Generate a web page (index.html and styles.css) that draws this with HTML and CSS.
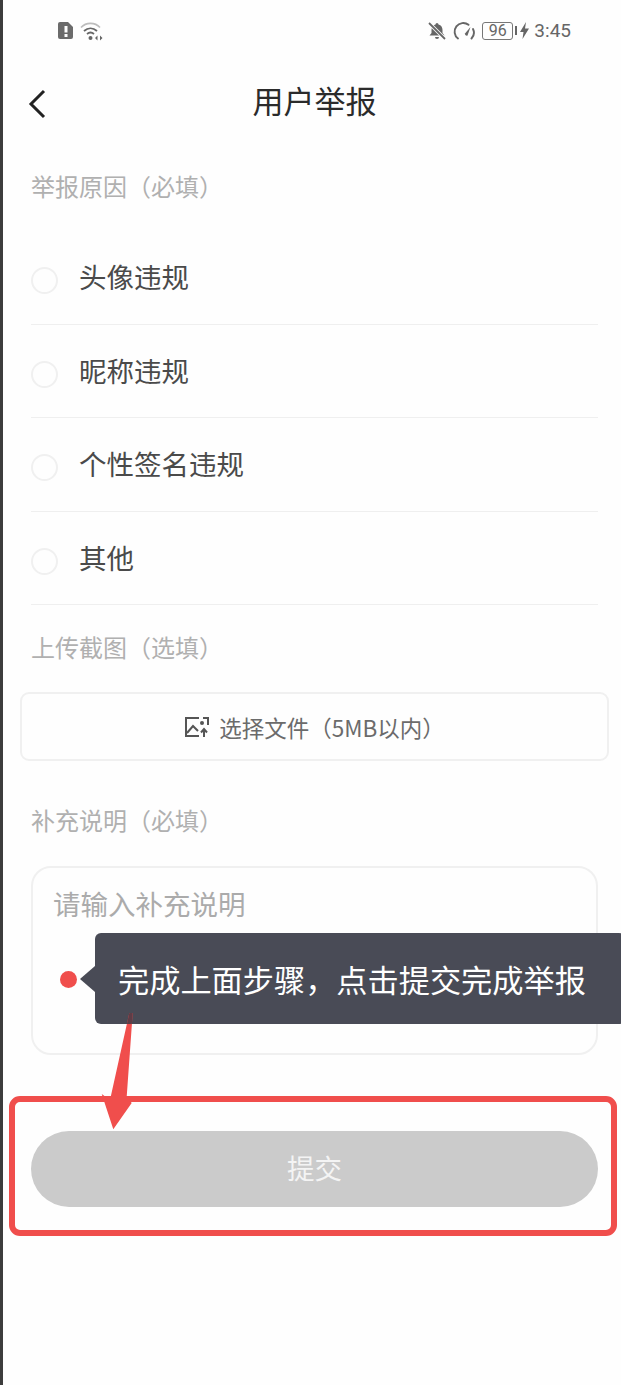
FILE: index.html
```html
<!DOCTYPE html>
<html lang="zh-CN">
<head>
    <meta charset="UTF-8">
    <title>用户举报</title>
    <link rel="stylesheet" href="styles.css">
</head>
<body>
    <div class="page">
        <div class="status-bar">
            <div class="status-left">
                <svg width="18" height="19" viewBox="0 0 18 19">
                    <path d="M3 1h8l5 5v10a2 2 0 0 1-2 2H3a2 2 0 0 1-2-2V3a2 2 0 0 1 2-2z" fill="#6b6b6b"/>
                    <rect x="7.5" y="5" width="3" height="6.5" fill="#fff"/>
                    <rect x="7.5" y="13" width="3" height="3" fill="#fff"/>
                </svg>
                <svg width="24" height="20" viewBox="0 0 24 20" fill="none">
                    <path d="M1 6.500C6 1 15 1 20 6.500" stroke="#bcbcbc" stroke-width="1.6"/>
                    <path d="M4 10c4-3.600 9-3.600 13 0" stroke="#666" stroke-width="1.8"/>
                    <path d="M7 13c2.400-2 4.600-2 7 0" stroke="#666" stroke-width="1.8"/>
                    <circle cx="10.500" cy="17" r="2" fill="#666"/>
                    <path d="M17.500 14.500v5l-2.500-2.500zM20 14.500v5l2.500-2.500z" fill="#666"/>
                </svg>
            </div>
            <div class="status-right">
                <svg width="20" height="20" viewBox="0 0 20 20">
                    <path d="M10 2a1.500 1.500 0 0 1 1.500 1.500c2.800.7 4 3 4 5.500v3l2 2.500H2.500l2-2.500V9c0-2.500 1.200-4.800 4-5.500A1.500 1.500 0 0 1 10 2zM8 16h4a2 2 0 0 1-4 0z" fill="#666"/>
                    <path d="M2 2l16 16" stroke="#fff" stroke-width="3.500"/>
                    <path d="M2 2l16 16" stroke="#666" stroke-width="1.800"/>
                </svg>
                <svg class="speed-icon" width="23" height="20" viewBox="0 0 23 20" fill="none">
                    <path d="M5 17.500A8.500 8.500 0 0 1 15.500 3.800" stroke="#666" stroke-width="1.900" stroke-linecap="round"/>
                    <path d="M20 8a8.500 8.500 0 0 1-1.500 9.500" stroke="#666" stroke-width="1.900" stroke-linecap="round"/>
                    <path d="M17.500 6l-5.500 6.500a1.800 1.800 0 0 0 2.500 2z" fill="#666"/>
                </svg>
                <div class="battery"><span class="battery-level">96</span></div>
                <div class="battery-cap"></div>
                <svg class="bolt" width="9" height="17" viewBox="0 0 9 17">
                    <path d="M6 0L0 10h3.500L2.500 17 9 6.500H5z" fill="#666"/>
                </svg>
                <span class="clock">3:45</span>
            </div>
        </div>

        <div class="nav-bar">
            <svg class="back-icon" width="18" height="30" viewBox="0 0 18 30" fill="none">
                <path d="M16 2L3 15l13 13" stroke="#222" stroke-width="3"/>
            </svg>
            <h1>用户举报</h1>
        </div>

        <div class="form">
            <p class="section-label first">举报原因（必填）</p>
            <div class="option-list">
                <div class="option"><span class="radio"></span><span>头像违规</span></div>
                <div class="option"><span class="radio"></span><span>昵称违规</span></div>
                <div class="option"><span class="radio"></span><span>个性签名违规</span></div>
                <div class="option"><span class="radio"></span><span>其他</span></div>
            </div>

            <p class="section-label upload-label">上传截图（选填）</p>
            <div class="upload-box">
                <svg width="26" height="22" viewBox="0 0 26 22" fill="none">
                    <path d="M15 2H2v18h13" stroke="#555" stroke-width="2"/>
                    <path d="M19 2h5v7" stroke="#555" stroke-width="2"/>
                    <path d="M3 17l6-7 5 5" stroke="#555" stroke-width="2"/>
                    <circle cx="18" cy="7" r="2" fill="#555"/>
                    <path d="M20 21v-7M17 16.500l3-3.500 3 3.500" stroke="#555" stroke-width="2"/>
                </svg>
                <span>选择文件（5MB以内）</span>
            </div>

            <p class="section-label note-label">补充说明（必填）</p>
            <div class="note-box">请输入补充说明</div>

            <div class="submit-btn">提交</div>
        </div>

        <!-- guide overlay on top of the form -->
        <div class="guide-frame"></div>
        <div class="guide-dot"></div>
        <div class="guide-tip">完成上面步骤，点击提交完成举报</div>
        <svg class="guide-arrow" width="40" height="125" viewBox="0 0 40 125">
            <path d="M36.300 1L39.700 1 33.700 84.700 38.700 91 20.300 117.300 8.700 82 17 88z" fill="#f04e4c"/>
            <path d="M36.300 1L39.700 1 38.900 12 33.900 12z" fill="#5e3d47"/>
        </svg>
    </div>
</body>
</html>
```

FILE: styles.css
```css
* {
    box-sizing: border-box;
}

body {
    margin: 0;
    background-color: #fff;
    font-family: "Noto Sans CJK SC", "Liberation Sans", sans-serif;
}

.page {
    position: relative;
    width: 621px;
    height: 1385px;
    overflow: hidden;
    background-color: #fefefe;
    border-left: 3px solid #3c3c3c;
}

.status-bar {
    height: 60px;
    display: flex;
    justify-content: space-between;
    align-items: center;
    padding: 1px 50px 0 54px;
}

.status-left {
    display: flex;
    align-items: center;
    gap: 5px;
}

.status-right {
    display: flex;
    align-items: center;
    color: #666;
}

.speed-icon {
    margin-left: 6px;
}

.battery {
    margin-left: 6px;
    width: 31px;
    height: 18px;
    border: 1.5px solid #777;
    border-radius: 3px;
    display: flex;
    align-items: center;
    justify-content: center;
}

.battery-level {
    font-family: Roboto, sans-serif;
    font-size: 16px;
    line-height: 1;
}

.battery-cap {
    width: 2px;
    height: 9px;
    margin-left: 2px;
    background-color: #666;
}

.bolt {
    margin-left: 3px;
}

.clock {
    margin-left: 5px;
    font-family: Roboto, sans-serif;
    font-size: 19px;
}

.nav-bar {
    position: relative;
    height: 84px;
    padding-bottom: 6px;
    display: flex;
    align-items: center;
    justify-content: center;
}

.nav-bar h1 {
    margin: 0 0 0 5px;
    font-size: 31px;
    font-weight: 400;
    color: #2b2b2b;
}

.back-icon {
    position: absolute;
    left: 25px;
    top: 29px;
}

.form {
    padding: 0 23px 0 28px;
}

.section-label {
    margin: 0;
    font-size: 24px;
    line-height: 32px;
    color: #b0b0b0;
}

.section-label.first {
    margin-top: 26px;
}

.option-list {
    margin-top: 29px;
}

.option {
    height: 93.500px;
    display: flex;
    align-items: center;
    gap: 21px;
    border-bottom: 1.500px solid #efefef;
    font-size: 27.500px;
    color: #4a4a4a;
}

.option > span:last-child {
    margin-top: -2px;
}

.radio {
    width: 27px;
    height: 27px;
    margin-top: 7px;
    border: 2px solid #f0f0f0;
    border-radius: 50%;
}

.upload-label {
    margin-top: 26px;
}

.upload-box {
    height: 69px;
    margin: 29px -11px 0 -11px;
    display: flex;
    align-items: center;
    justify-content: center;
    gap: 9px;
    border: 2px solid #f0f0f0;
    border-radius: 9px;
    font-size: 22.500px;
    color: #6b6b6b;
}

.note-label {
    margin-top: 43px;
}

.note-box {
    height: 189px;
    margin-top: 30px;
    padding: 15px 20px;
    border: 2px solid #f0f0f0;
    border-radius: 20px;
    font-size: 27.500px;
    color: #ababab;
}

.submit-btn {
    height: 76px;
    margin-top: 76px;
    padding-bottom: 5px;
    display: flex;
    align-items: center;
    justify-content: center;
    border-radius: 38px;
    background-color: #cbcbcb;
    font-size: 27.500px;
    color: #f4f4f4;
}

.guide-frame {
    position: absolute;
    left: 6px;
    top: 1095.500px;
    width: 607.500px;
    height: 140px;
    border: 6.500px solid #f04e4c;
    border-radius: 11px;
}

.guide-arrow {
    position: absolute;
    left: 90px;
    top: 1012px;
}

.guide-dot {
    position: absolute;
    left: 56.500px;
    top: 970.500px;
    width: 17px;
    height: 17px;
    border-radius: 50%;
    background-color: #f04e4c;
}

.guide-tip {
    position: absolute;
    left: 92px;
    top: 933px;
    width: 530px;
    height: 91px;
    padding-left: 23px;
    display: flex;
    align-items: center;
    border-radius: 6px;
    background-color: #494b56;
    font-size: 31.200px;
    color: #fff;
}

.guide-tip::before {
    content: "";
    position: absolute;
    left: -15px;
    top: 33px;
    border-style: solid;
    border-width: 13px 15px 13px 0;
    border-color: transparent #494b56 transparent transparent;
}
```
